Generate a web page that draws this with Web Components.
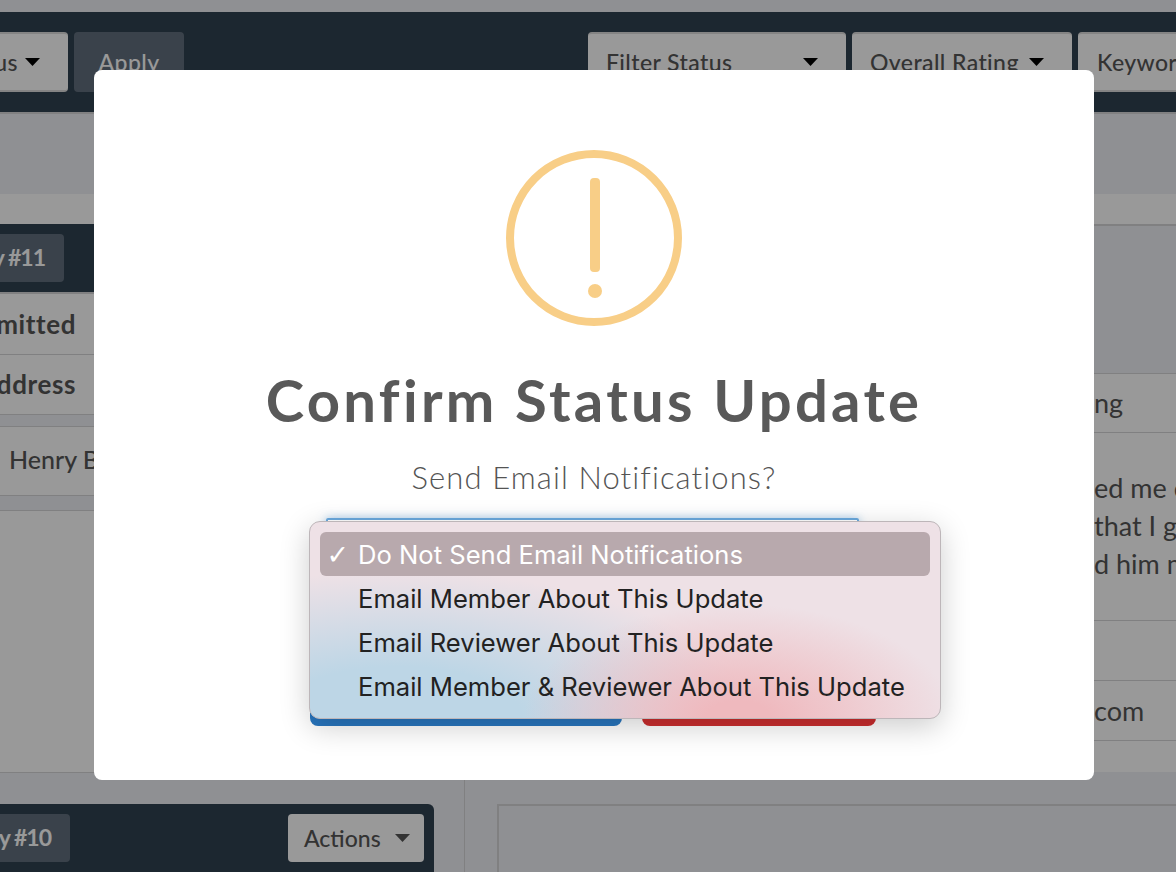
<!DOCTYPE html>
<html lang="en">
<head>
<meta charset="utf-8">
<title>Confirm Status Update</title>
<style>
  html, body { margin: 0; height: 872px; overflow: hidden; }
  body { background: #eef0f6; font-family: Lato, "Open Sans", sans-serif; color: #555; }
</style>
</head>
<body>

<app-navbar>
  <div slot="left" style="display:flex;gap:6px;margin-left:-132px">
    <nav-button width="200" align="end">Status</nav-button>
    <nav-button width="110" dim>Apply</nav-button>
  </div>
  <div slot="right" style="display:flex;gap:6px;margin-right:-102px">
    <nav-button width="258" between>Filter Status</nav-button>
    <nav-button width="220" between>Overall Rating</nav-button>
    <nav-button width="200" plain>Keyword</nav-button>
  </div>
</app-navbar>

<entries-layout>
  <div slot="left">
    <entry-card title="Entry #11">
      <entry-row height="61" strong>Submitted</entry-row>
      <entry-row height="60" strong>Address</entry-row>
      <div style="height:11px;background:#eef0f6"></div>
      <entry-row height="70" lined indent>Henry B</entry-row>
      <div style="height:14px;background:#eef0f6"></div>
    </entry-card>
    <div style="height:261px;background:#fff;border-top:1px solid #d5d5d8;border-bottom:1px solid #d5d5d8"></div>
    <div style="height:31px"></div>
    <entry-card title="Entry #10" actions></entry-card>
  </div>
  <div slot="right">
    <detail-row height="59" gap="149" pad="627">ng</detail-row>
    <detail-row height="188" pad="627" top="36" lines>
      <span>ed me c</span><span>that I g</span><span>d him m</span>
    </detail-row>
    <detail-row height="60" pad="627"></detail-row>
    <detail-row height="60" pad="627">com</detail-row>
    <detail-row height="32" pad="627"></detail-row>
    <div style="height:32px"></div>
    <div style="margin-left:32px;height:66px;background:#eef0f6;border:1px solid #d5d5d8;border-width:2px 0 0 2px"></div>
  </div>
</entries-layout>

<confirm-modal heading="Confirm Status Update" prompt="Send Email Notifications?">
  <option-menu></option-menu>
</confirm-modal>

<script>
const caret = `<svg width="15" height="8" viewBox="0 0 15 8"><path d="M0 0H15L7.5 8Z" fill="currentColor"/></svg>`;

class AppNavbar extends HTMLElement {
  constructor() {
    super();
    this.attachShadow({mode: "open"}).innerHTML = `
      <style>
        :host {
          display: flex; justify-content: space-between; align-items: center;
          height: 100px; margin-top: 12px; background: #2f4150;
          border-bottom: 2px solid #d5d5d8; box-sizing: content-box;
        }
      </style>
      <slot name="left"></slot><slot name="right"></slot>`;
  }
}

class NavButton extends HTMLElement {
  connectedCallback() {
    const dim = this.hasAttribute("dim");
    const plain = this.hasAttribute("plain");
    const justify = this.hasAttribute("between") ? "space-between" : (this.getAttribute("align") == "end" ? "flex-end" : (dim ? "center" : "flex-start"));
    this.attachShadow({mode: "open"}).innerHTML = `
      <style>
        :host {
          display: flex; align-items: center; justify-content: ${justify};
          box-sizing: border-box; height: 60px; width: ${this.getAttribute("width")}px;
          padding: 0 ${dim ? 0 : 28}px 0 ${plain ? 19 : dim ? 0 : 18}px;
          gap: 7px; border-radius: 4px; font-size: 23px; letter-spacing: .4px; font-weight: 500; white-space: nowrap;
          background: ${dim ? "#626f7d" : "#fff"};
          color: ${dim ? "#fff" : "#555"};
          border-top: ${dim ? 0 : "2px solid #dcdcdc"};
          border-bottom: ${dim ? 0 : "2px solid #dcdcdc"};
        }
        svg { color: #000; flex: none; }
      </style>
      <slot></slot>${dim || plain ? "" : caret}`;
  }
}

class EntriesLayout extends HTMLElement {
  constructor() {
    super();
    this.attachShadow({mode: "open"}).innerHTML = `
      <style>
        :host { display: block; padding-top: 80px; }
        .band { height: 30px; background: #fff; }
        .cols { display: flex; }
        .left { flex: none; width: 465px; box-sizing: border-box; border-right: 1px solid #d5d5d8; height: 648px; padding-right: 30px; }
        .right { flex: 1; min-width: 0; }
      </style>
      <div class="band"></div>
      <div class="cols">
        <div class="left"><slot name="left"></slot></div>
        <div class="right"><slot name="right"></slot></div>
      </div>`;
  }
}

class EntryCard extends HTMLElement {
  connectedCallback() {
    const actions = this.hasAttribute("actions");
    this.attachShadow({mode: "open"}).innerHTML = `
      <style>
        :host { display: block; }
        .head {
          height: 68px; background: #2f4150; border-top-right-radius: 6px;
          display: flex; align-items: center; justify-content: space-between; padding-right: 10px;
        }
        .tag {
          height: 48px; width: ${actions ? 190 : 184}px; margin-left: -120px; padding: 0 19px 2px 0; box-sizing: border-box;
          display: flex; align-items: center; justify-content: flex-end;
          background: #626f7d; color: #fff; border-radius: 4px; font-size: 23px; letter-spacing: -1px; font-weight: 700; white-space: nowrap;
        }
        .act {
          height: 48px; width: 136px; box-sizing: border-box; padding: 0 14px 0 16px;
          display: flex; align-items: center; justify-content: space-between;
          background: #fff; color: #555; border-radius: 4px; font-size: 23px; font-weight: 500;
        }
        .act svg { color: #555; }
        .bar { height: 2px; background: #d5d5d8; }
      </style>
      <div class="head">
        <div class="tag">${this.getAttribute("title")}</div>
        ${actions ? `<div class="act">Actions ${caret}</div>` : ""}
      </div>
      ${actions ? "" : '<div class="bar"></div>'}
      <slot></slot>`;
  }
}

class EntryRow extends HTMLElement {
  connectedCallback() {
    const strong = this.hasAttribute("strong");
    const indent = this.hasAttribute("indent");
    this.attachShadow({mode: "open"}).innerHTML = `
      <style>
        :host {
          display: flex; align-items: center; box-sizing: border-box; height: ${this.getAttribute("height")}px;
          background: #fff; font-size: ${strong ? 26 : 25}px; letter-spacing: ${strong ? ".6px" : "0"}; color: #555; font-weight: ${strong ? 700 : 500};
          border-bottom: 1px solid #d5d5d8;
          ${this.hasAttribute("lined") ? "border-top: 1px solid #d5d5d8;" : ""}
          white-space: nowrap;
        }
        .t { ${indent ? "padding: 0 0 4px 9px;" : "width: 76px; display: flex; justify-content: flex-end; padding-bottom: 1px;"} }
      </style>
      <span class="t"><slot></slot></span>`;
  }
}

class DetailRow extends HTMLElement {
  connectedCallback() {
    const gap = this.getAttribute("gap") || 0;
    const top = this.getAttribute("top");
    this.attachShadow({mode: "open"}).innerHTML = `
      <style>
        :host {
          display: block; box-sizing: border-box; height: ${Number(this.getAttribute("height")) + Number(gap)}px;
          ${gap ? "border-top: 2px solid #d5d5d8;" : ""}
          padding-top: ${gap ? Number(gap) - 2 : 0}px;
        }
        .cell {
          box-sizing: border-box; height: 100%; background: #fff; border-top: 1px solid #d5d5d8;
          padding-left: ${Number(this.getAttribute("pad")) + 2}px;
          ${top ? `padding-top: ${top}px;` : "display: flex; align-items: center;"}
          font-size: 27px; line-height: 38px; color: #555; white-space: nowrap;
        }
        ::slotted(span) { display: block; }
      </style>
      <div class="cell"><slot></slot></div>`;
  }
}

class ConfirmModal extends HTMLElement {
  connectedCallback() {
    this.attachShadow({mode: "open"}).innerHTML = `
      <style>
        :host {
          position: fixed; inset: 0; display: flex; justify-content: center; align-items: flex-start;
          background: rgba(0, 0, 0, .4); padding: 70px 0 0 12px; box-sizing: border-box;
        }
        .modal {
          position: relative; width: 1000px; height: 710px; background: #fff; border-radius: 8px;
          display: flex; flex-direction: column; align-items: center; padding-top: 80px; box-sizing: border-box;
        }
        h2 { margin: 39px 0 0; font-size: 58px; letter-spacing: 3.3px; line-height: 70px; font-weight: 700; color: #595959; white-space: nowrap; }
        p { margin: 24px 0 0; font-size: 31px; letter-spacing: 1.1px; line-height: 36px; font-weight: 300; color: #545454; }
        .select {
          margin: 23px 3px 0 0; width: 533px; height: 60px; box-sizing: border-box; flex: none;
          border: 2px solid #6aa9de; box-shadow: 0 0 10px rgba(106, 169, 222, .6); border-radius: 2px;
        }
        .buttons { margin: 72px 2px 0 0; display: flex; gap: 20px; height: 76px; }
        .ok, .no { height: 76px; border-radius: 8px; }
        .ok { width: 312px; background: #2876bf; }
        .no { width: 234px; background: #cb2d2e; }
      </style>
      <div class="modal">
        <svg width="176" height="176" viewBox="0 0 176 176">
          <circle cx="88" cy="88" r="84" fill="none" stroke="#f8ce87" stroke-width="8"/>
          <rect x="84" y="28" width="10" height="94" rx="4" fill="#f8ce87"/>
          <circle cx="89" cy="141" r="7" fill="#f8ce87"/>
        </svg>
        <h2>${this.getAttribute("heading")}</h2>
        <p>${this.getAttribute("prompt")}</p>
        <div class="select"></div>
        <div class="buttons"><div class="ok"></div><div class="no"></div></div>
        <slot></slot>
      </div>`;
  }
}

class OptionMenu extends HTMLElement {
  constructor() {
    super();
    const items = [
      "Do Not Send Email Notifications",
      "Email Member About This Update",
      "Email Reviewer About This Update",
      "Email Member &amp; Reviewer About This Update"
    ];
    this.attachShadow({mode: "open"}).innerHTML = `
      <style>
        :host {
          position: absolute; left: 215px; top: 451px; width: 632px; height: 198px; box-sizing: border-box;
          padding: 10px; border: 1px solid #bdb6b9; border-radius: 11px;
          background:
            radial-gradient(ellipse 34% 58% at 68% 100%, #efb9be 15%, rgba(239,185,190,0) 100%),
            radial-gradient(ellipse 56% 75% at 14% 100%, #bdd6e6 35%, rgba(189,214,230,0) 100%),
            #eee1e6;
          box-shadow: 0 8px 30px rgba(0, 0, 0, .2);
          font-family: Inter, "Liberation Sans", sans-serif; font-size: 25.6px; color: #222;
        }
        .item { display: flex; align-items: center; height: 44px; border-radius: 6px; white-space: nowrap; }
        .item.on { background: #b8a9ad; color: #fff; }
        .item span:last-child { padding-top: 1px; }
        .check { width: 38px; flex: none; text-align: right; padding-right: 9px; box-sizing: border-box; font-family: "DejaVu Sans", sans-serif; font-size: 27px; font-weight: 700; }
      </style>
      ${items.map((t, i) => `<div class="item${i == 0 ? " on" : ""}"><span class="check">${i == 0 ? "✓" : ""}</span><span>${t}</span></div>`).join("")}`;
  }
}

customElements.define("app-navbar", AppNavbar);
customElements.define("nav-button", NavButton);
customElements.define("entries-layout", EntriesLayout);
customElements.define("entry-card", EntryCard);
customElements.define("entry-row", EntryRow);
customElements.define("detail-row", DetailRow);
customElements.define("confirm-modal", ConfirmModal);
customElements.define("option-menu", OptionMenu);
</script>
</body>
</html>
